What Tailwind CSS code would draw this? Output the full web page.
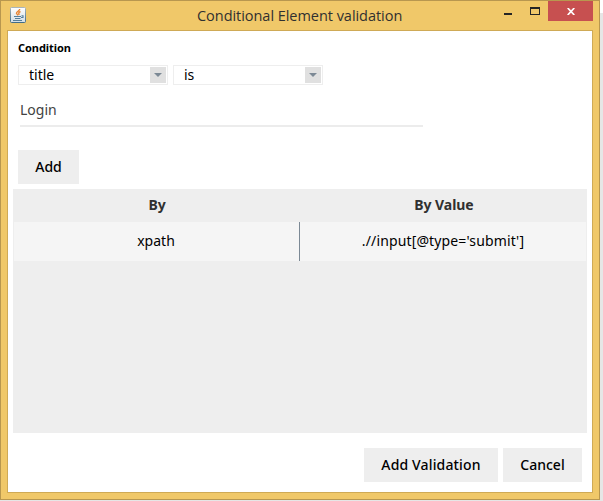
<!DOCTYPE html>
<html lang="en">
<head>
<meta charset="utf-8">
<title>Conditional Element validation</title>
<script src="https://cdn.jsdelivr.net/npm/@tailwindcss/browser@4"></script>
</head>
<body class="h-[501px] w-[603px] overflow-hidden bg-[#e6e6e6] font-['Noto_Sans',sans-serif] text-[14px] text-black">
<div class="flex">
<div class="flex h-[500px] w-[600px] flex-col border border-[#b8974f] bg-[#f0c869] px-[6px] pb-[6px]">
  <header class="flex h-[29px] shrink-0 items-start">
    <svg class="ml-[3px] mt-[6px] h-4 w-4 shrink-0" viewBox="0 0 16 16">
      <defs><linearGradient id="g" x2="0" y2="1"><stop stop-color="#fff"/><stop offset="1" stop-color="#d2dde4"/></linearGradient><linearGradient id="b" x2="0" y2="1"><stop stop-color="#a9b5bb"/><stop offset="1" stop-color="#416d89"/></linearGradient></defs>
      <rect x=".5" y=".5" width="15" height="15" rx="1" fill="url(#g)" stroke="url(#b)"/>
      <path d="M9.800 2C9.500 4 6.500 4.500 6.500 6.300L8 8.300M10.500 4.500C8.500 5.300 8.300 6 9.300 7.800" fill="none" stroke="#e88431" stroke-width="1.400"/>
      <path d="M4 9.500H11M5 11.500H10.500M3 13.500H12M11.500 8.800H13V10.500H11" fill="none" stroke="#557f9b" stroke-width="1.100"/>
    </svg>
    <h1 class="ml-[171px] mt-[5px] w-[210px] whitespace-nowrap font-['Open_Sans',sans-serif] text-[14.500px] leading-5 tracking-[-0.04px] text-[#303030]">Conditional Element validation</h1>
    <div class="ml-[97px] mt-[12px] h-[2px] w-2 shrink-0 bg-[#252525]"></div>
    <div class="ml-[18px] mt-[6px] h-2 w-[10px] shrink-0 border border-t-2 border-[#252525]"></div>
    <div class="ml-2 flex h-5 w-[45px] shrink-0 items-center justify-center bg-[#c75050]">
      <svg class="h-[7px] w-2" viewBox="0 0 8 7"><path d="M.7 0L7.300 7M7.300 0L.7 7" stroke="#fff" stroke-width="1.700"/></svg>
    </div>
  </header>
  <main class="flex h-[463px] w-[586px] flex-col border border-[#cfaa56] bg-white px-[5px]">
    <div class="ml-[5px] mt-[9px] h-4 text-[11px] font-bold leading-4 tracking-[-0.07px]">Condition</div>
    <div class="ml-[5px] mt-[9px] flex gap-[5px]">
      <div class="flex h-5 w-[150px] items-center justify-between border border-[#eeeeee] pl-[10px] pr-px"><span class="leading-[18px]">title</span><span class="flex h-4 w-4 items-center justify-center bg-[#e0e0e0]"><svg class="h-1 w-2" viewBox="0 0 8 4"><path d="M0 0H8L4 4Z" fill="#7c8995"/></svg></span></div>
      <div class="flex h-5 w-[150px] items-center justify-between border border-[#eeeeee] pl-[10px] pr-px"><span class="leading-[18px]">is</span><span class="flex h-4 w-4 items-center justify-center bg-[#e0e0e0]"><svg class="h-1 w-2" viewBox="0 0 8 4"><path d="M0 0H8L4 4Z" fill="#7c8995"/></svg></span></div>
    </div>
    <div class="ml-[7px] mt-[10px] h-8 w-[403px] border-b-2 border-[#ececec] pt-[5px] leading-5 text-[#424242]">Login</div>
    <button class="ml-[5px] mt-[23px] h-[34px] w-[61px] shrink-0 bg-[#eeeeee] pb-[2px] font-medium">Add</button>
    <div class="mt-[5px] h-[244px] w-[574px] shrink-0 bg-[#eeeeee] px-px text-center">
      <div class="grid h-[33px] grid-cols-2 items-center pb-[2px] font-bold tracking-[-0.05px] text-[#303030]"><span>By</span><span class="pl-[2px]">By Value</span></div>
      <div class="flex h-[39px] bg-[#f5f5f5] leading-[37px]"><span class="w-[286px] border-r border-[#7c8995] pr-px">xpath</span><span class="flex-1 tracking-[0.13px]">.//input[@type='submit']</span></div>
    </div>
    <div class="mr-[5px] mt-[15px] flex h-[34px] justify-end gap-[5px]">
      <button class="w-[134px] bg-[#eeeeee] pb-[2px] font-medium tracking-[0.15px]">Add Validation</button>
      <button class="w-[79px] bg-[#eeeeee] pb-[2px] font-medium">Cancel</button>
    </div>
  </main>
</div>
<div class="h-[13px] w-[3px] bg-white"></div>
</div>
</body>
</html>
